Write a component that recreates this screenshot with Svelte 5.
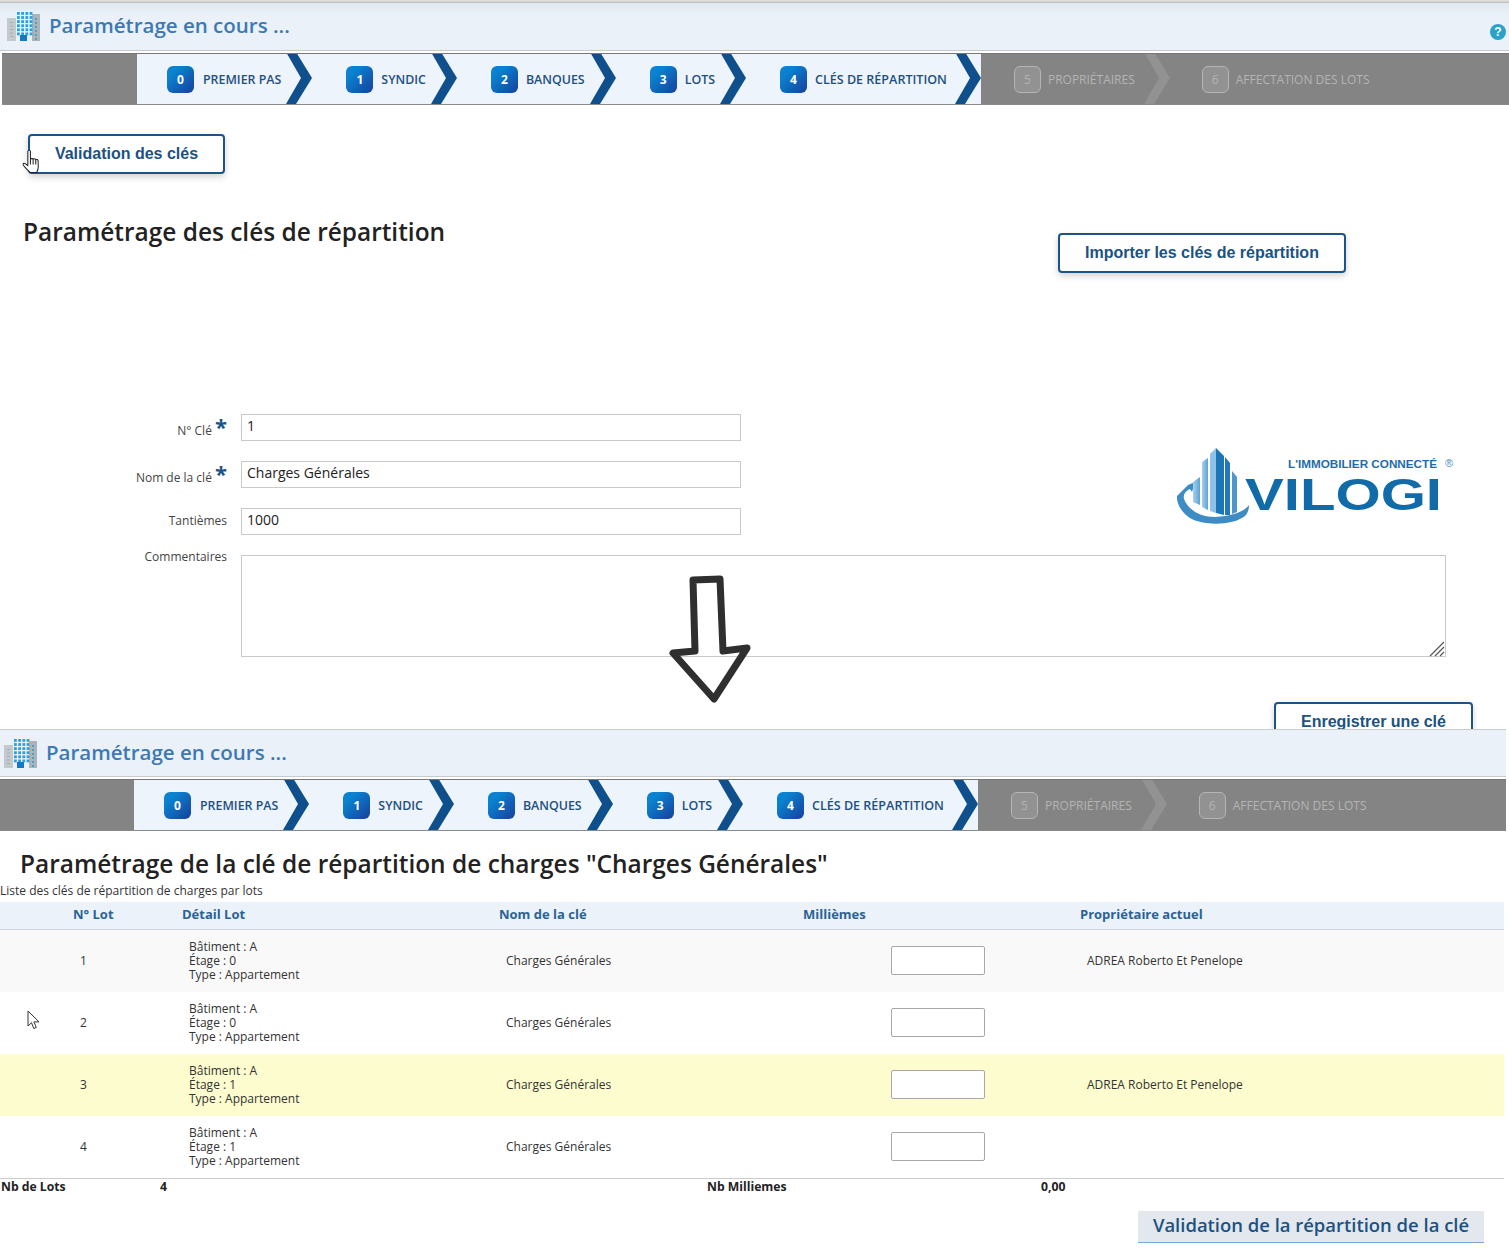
<script>
  const steps = [
    { n: 0, label: 'PREMIER PAS' },
    { n: 1, label: 'SYNDIC' },
    { n: 2, label: 'BANQUES' },
    { n: 3, label: 'LOTS' },
    { n: 4, label: 'CLÉS DE RÉPARTITION' }
  ];
  const todo = [
    { n: 5, label: 'PROPRIÉTAIRES' },
    { n: 6, label: 'AFFECTATION DES LOTS' }
  ];
  const lots = [
    { n: 1, etage: 0, owner: 'ADREA Roberto Et Penelope', tone: 'odd' },
    { n: 2, etage: 0, owner: '', tone: 'even' },
    { n: 3, etage: 1, owner: 'ADREA Roberto Et Penelope', tone: 'hl' },
    { n: 4, etage: 1, owner: '', tone: 'even' }
  ];
  const wins = [];
  for (let r = 0; r < 6; r++) for (let c = 0; c < 4; c++) wins.push({ x: 11 + c * 4.2, y: 2 + r * 4.1 });
</script>

{#snippet chevron(kind)}
  <svg class="chev" viewBox="0 0 26 52" aria-hidden="true">
    {#if kind === 'last'}<polygon points="0,0 10,0 26,26 10,52 0,52" fill="#eef4fb" />{/if}
    <polygon points="0,0 10,0 26,26 10,52 0,52 15,26" fill={kind === 'off' ? '#929292' : '#0f4f8b'} />
  </svg>
{/snippet}

{#snippet topbar(help)}
  <header class="head">
    <svg class="bld" viewBox="0 0 34 32" aria-hidden="true">
      <rect x="0" y="8" width="9" height="23" fill="#c3c9cc" />
      <rect x="25" y="4" width="8" height="27" fill="#a9b5ba" />
      <rect x="9" y="0" width="16" height="31" fill="#e9f2f9" />
      {#each wins as w}<rect x={w.x - 1} y={w.y} width="2.8" height="2.8" fill="#2f9fdc" />{/each}
      {#each [0, 1, 2, 3, 4, 5] as i}<rect x="28" y={8 + i * 4} width="2" height="2" fill="#4aa3cf" />{/each}
      {#each [0, 1, 2, 3, 4] as i}<rect x="3" y={12 + i * 3.5} width="3" height="1" fill="#a5acaf" />{/each}
      <rect x="13" y="25" width="7" height="6" fill="#1478c4" />
    </svg>
    <span class="head-t">Paramétrage en cours ...</span>
    {#if help}<span class="help">?</span>{/if}
  </header>
{/snippet}

{#snippet wizard()}
  <nav class="nav">
    <div class="done">
      {#each steps as s, i}
        <div class="step">
          <span class="badge">{s.n}</span>
          <span class="lbl">{s.label}</span>
          {@render chevron(i === steps.length - 1 ? 'last' : 'on')}
        </div>
      {/each}
    </div>
    {#each todo as s, i}
      <div class="step off">
        <span class="badge">{s.n}</span>
        <span class="lbl">{s.label}</span>
        {#if i === 0}{@render chevron('off')}{/if}
      </div>
    {/each}
  </nav>
{/snippet}

<div class="page">
  <section class="one">
    <div class="chrome"></div>
    {@render topbar(true)}
    {@render wizard()}
    <div class="one-body">
      <button class="btn b-valid">Validation des clés</button>
      <div class="title-row">
        <h1>Paramétrage des clés de répartition</h1>
        <button class="btn b-import">Importer les clés de répartition</button>
      </div>
      <form class="form">
        <label for="f1">N° Clé <b>*</b></label>
        <input id="f1" value="1" />
        <label for="f2">Nom de la clé <b>*</b></label>
        <input id="f2" value="Charges Générales" />
        <label for="f3" class="plain">Tantièmes</label>
        <input id="f3" value="1000" />
        <div class="logo">
          <svg viewBox="0 0 282 80" aria-label="Vilogi">
            <defs>
              <linearGradient id="tw" x1="0" x2="1"><stop offset="0" stop-color="#a9d1ec" /><stop offset="1" stop-color="#5aa3d6" /></linearGradient>
            </defs>
            <path d="M15 40L4 51C3 60 12 73 24 76 40 81 62 79 72 71 75 68 76 64 76 60 72 66 60 71 42 72 28 72 16 66 11 54 10 50 12 46 17 44L19 47 22 37z" fill="#3d8cc4" />
            <path d="M20 37l7-5v28l-7-3z" fill="url(#tw)" />
            <path d="M29 17l6-4v52l-6-3z" fill="url(#tw)" />
            <path d="M37 9l6-6v65l-6-2z" fill="#8fc2e6" />
            <path d="M43 3l8 8v59l-8-2z" fill="#1b75b6" />
            <path d="M52 12l5 6v52l-5 0z" fill="#2279b9" />
            <path d="M59 26l5 6v35l-5 2z" fill="#4d97cd" />
            <text x="115" y="23" class="lg-top" textLength="149" lengthAdjust="spacingAndGlyphs">L'IMMOBILIER CONNECTÉ</text>
            <text x="272" y="22" class="lg-r">®</text>
            <text x="72" y="65" class="lg-main" textLength="197" lengthAdjust="spacingAndGlyphs">VILOGI</text>
          </svg>
        </div>
        <label for="f4" class="lc">Commentaires</label>
        <textarea id="f4"></textarea>
      </form>
      <div class="save"><button class="btn b-save">Enregistrer une clé</button></div>
    </div>
  </section>

  <section class="two">
    {@render topbar(false)}
    {@render wizard()}
    <h1>Paramétrage de la clé de répartition de charges "Charges Générales"</h1>
    <p class="sub">Liste des clés de répartition de charges par lots</p>
    <div class="tbl">
      <div class="row thead">
        <span>N° Lot</span><span>Détail Lot</span><span>Nom de la clé</span><span>Millièmes</span><span>Propriétaire actuel</span>
      </div>
      {#each lots as l}
        <div class="row body {l.tone}">
          <span class="num">{l.n}</span>
          <span class="det">Bâtiment : A<br />Étage : {l.etage}<br />Type : Appartement</span>
          <span class="cell">Charges Générales</span>
          <span class="cell"><input class="mil" aria-label="Millièmes lot {l.n}" /></span>
          <span class="cell">{l.owner}</span>
        </div>
      {/each}
    </div>
    <div class="foot">
      <span>Nb de Lots</span><span>4</span><span>Nb Milliemes</span><span>0,00</span>
    </div>
    <div class="final"><button class="b-final">Validation de la répartition de la clé</button></div>
  </section>

  <svg class="grip" viewBox="0 0 16 16" aria-hidden="true">
    <path d="M15 1L1 15M15 6L6 15M15 11L11 15" />
  </svg>
  <svg class="arrow" viewBox="0 0 90 135" aria-hidden="true">
    <path d="M13 7 L40 6 L43 78 L67 75 L34 126 L-7 80 L15 78 Z" />
  </svg>
  <svg class="hand" viewBox="0 0 19 25" aria-hidden="true">
    <path d="M6 1.500c1-.7 2 0 2 1V10c.3-1 2.400-1 2.600 0 .3-.8 2.300-.8 2.500.4.500-.6 2.200-.4 2.300.8l.1 6c0 2.500-.6 3.500-1.500 5.300H7.500C6 20.500 1.500 17 1 15c-.3-1.200 1-1.700 2-1l2.500 2V2.500c0-.4.200-.8.500-1z" />
    <path d="M8 10v5M10.600 10v5M13.100 10.400V15" />
  </svg>
  <svg class="ptr" viewBox="0 0 13 20" aria-hidden="true">
    <path d="M1 1v15l3.500-3.300 2.300 5.800 2.500-1-2.400-5.600H12z" />
  </svg>
</div>

<style>
  :global(body) { margin: 0; background: #fff; }
  .page { position: relative; width: 1509px; height: 1257px; overflow: hidden; font-family: "Open Sans", sans-serif; color: #333; }

  .one { height: 729px; overflow: hidden; }
  .chrome { height: 3px; background: linear-gradient(#e6e6e6, #bcbcbc); }

  .head { display: flex; align-items: center; background: #eaf1f9; position: relative; box-sizing: border-box; padding-left: 7px; }
  .one .head { height: 48px; background: linear-gradient(#dfe7ef, #eaf1f9 12px); border-bottom: 1px solid #c9c9c9; padding-bottom: 4px; }
  .two .head { padding-left: 4px; height: 48px; border-top: 1px solid #ccc; border-bottom: 1px solid #c9c9c9; padding-bottom: 2px; width: 1506px; }
  .bld { width: 34px; height: 32px; flex: none; margin-top: 2px; }
  .head-t { margin-left: 8px; font-size: 20.5px; font-weight: 600; color: #3c79b4; }
  .help { position: absolute; right: 3px; top: 21px; width: 16px; height: 16px; border-radius: 50%; background: #2ba2c9; color: #fff; font: bold 12px/16px "Liberation Sans", sans-serif; text-align: center; }

  .nav { display: flex; height: 52px; margin-top: 2px; background: #848484; border-top: 1px solid #777; border-bottom: 1px solid #8a8a8a; box-sizing: border-box; overflow: hidden; }
  .one .nav { margin-left: 2px; padding-left: 135px; }
  .two .nav { width: 1506px; padding-left: 134px; }
  .done { display: flex; background: #eef4fb; padding-left: 30px; }
  .step { display: flex; align-items: center; }
  .step + .step { margin-left: 34px; }
  .done + .step { margin-left: 33px; }
  .off + .off { margin-left: 32px; }
  .badge { width: 27px; height: 27px; border-radius: 6px; background: linear-gradient(135deg, #0a82cf 25%, #173f9c); color: #fff; font-size: 12px; font-weight: 700; display: flex; align-items: center; justify-content: center; flex: none; }
  .lbl { margin: 0 5px 0 8px; font-size: 12.4px; font-weight: 600; color: #1d4f82; white-space: nowrap; }
  .step:first-child .lbl { margin-left: 9px; }
  .done .step:last-child .lbl { margin-right: 8px; font-size: 12.55px; }
  .chev { width: 26px; height: 52px; flex: none; display: block; margin-top: -2px; }
  .off .badge { background: #929292; border: 1px solid #b5b5b5; box-sizing: border-box; color: #b3b3b3; font-weight: 400; }
  .off .lbl { color: #b4b4b4; font-weight: 400; font-size: 12px; margin-left: 7px; }
  .off:not(:last-child) .lbl { margin-right: 9px; }

  .btn { display: block; box-sizing: border-box; background: #fff; border: 2px solid #1a5488; border-radius: 4px; height: 40px; font: bold 16px "Liberation Sans", sans-serif; color: #1b5283; box-shadow: 0 3px 7px rgba(0,0,0,.18); padding: 0; }
  .b-valid { margin: 29px 0 0 28px; width: 197px; }
  .title-row { display: flex; justify-content: space-between; align-items: flex-start; padding: 0 163px 0 23px; margin-top: 40px; }
  h1 { margin: 0; font-size: 24.45px; font-weight: 600; color: #222; line-height: 36px; white-space: nowrap; }
  .b-import { width: 288px; margin-top: 19px; }

  .form { display: grid; grid-template-columns: 227px 500px 1fr; grid-template-rows: 27px 27px 27px 102px; column-gap: 14px; row-gap: 20px; margin: 141px 63px 0 0; align-items: center; }
  .form label { text-align: right; font-size: 12px; color: #444; grid-column: 1; white-space: nowrap; position: relative; top: 2px; }
  .form label.plain { top: -1px; }
  .form label b { color: #1a5488; font-size: 22px; line-height: 10px; position: relative; top: 0; }
  .form input { grid-column: 2; height: 27px; box-sizing: border-box; border: 1px solid #c9c9c9; padding: 0 5px 5px; font: 14px "Open Sans", sans-serif; color: #222; outline: none; }
  .logo { grid-column: 3; grid-row: 1 / span 3; justify-self: start; width: 282px; position: absolute; left: 1173px; top: 445px; }
  .logo svg { display: block; width: 282px; height: 80px; }
  .lg-top { font: bold 11.5px "Liberation Sans", sans-serif; fill: #1e6da8; }
  .lg-r { font: 11px "Liberation Sans", sans-serif; fill: #4b8cbd; }
  .lg-main { font: bold 44px "Liberation Sans", sans-serif; fill: #126ba9; }
  .form label.lc { align-self: start; top: -7px; }
  .form textarea { grid-column: 2 / 4; height: 102px; box-sizing: border-box; border: 1px solid #c9c9c9; outline: none; display: block; align-self: start; margin: 0; resize: none; }
  .save { display: flex; justify-content: flex-end; padding-right: 36px; margin-top: 45px; }
  .b-save { width: 199px; }

  .two h1 { margin: 15px 0 0 20px; }
  .sub { margin: 1px 0 0; font-size: 12px; line-height: 16px; color: #333; }
  .tbl { width: 1504px; margin-top: 3px; border-bottom: 1px solid #ccc; }
  .row { display: grid; grid-template-columns: 109px 317px 304px 277px 1fr; padding-left: 73px; }
  .thead { height: 28px; align-items: center; background: #ecf2f9; border-bottom: 1px solid #cdd6de; box-sizing: border-box; padding-bottom: 4px; font-size: 13px; font-weight: 700; color: #2a6296; }
  .body { height: 62px; align-items: center; font-size: 12px; line-height: 14px; color: #333; }
  .body.odd { background: #f9f9f9; }
  .body.hl { background: #fdfcce; }
  .num, .det, .cell { padding-left: 7px; }
  .cell:has(.mil) { padding-left: 88px; display: flex; }
  .mil { width: 94px; height: 29px; margin-top: -2px; box-sizing: border-box; border: 1px solid #a8a8a8; border-radius: 2px; background: #fff; outline: none; }
  .foot { display: grid; grid-template-columns: 159px 547px 334px 1fr; padding-left: 1px; height: 16px; font-size: 12.2px; line-height: 16px; font-weight: 700; color: #222; }
  .final { display: flex; justify-content: flex-end; width: 1484px; margin-top: 16px; }
  .b-final { width: 346px; height: 32px; padding: 0 0 4px; background: #e2e8ee; border: 0; border-bottom: 1px solid #7ea7d0; font: 600 18.45px "Open Sans", sans-serif; color: #1b5283; }

  .grip { position: absolute; left: 1429px; top: 641px; width: 16px; height: 16px; }
  .grip path { fill: none; stroke: #555; stroke-width: 1.2px; }
  .arrow { position: absolute; left: 680px; top: 573px; width: 90px; height: 135px; overflow: visible; }
  .arrow path { fill: none; stroke: #2f2f2f; stroke-width: 7px; stroke-linejoin: round; }
  .hand { position: absolute; left: 22px; top: 149px; width: 20px; height: 26px; }
  .hand path { fill: #fff; stroke: #222; stroke-width: 1px; stroke-linejoin: round; }
  .ptr { position: absolute; left: 27px; top: 1010px; width: 13px; height: 20px; }
  .ptr path { fill: #fff; stroke: #333; stroke-width: 1px; stroke-linejoin: round; }
</style>
